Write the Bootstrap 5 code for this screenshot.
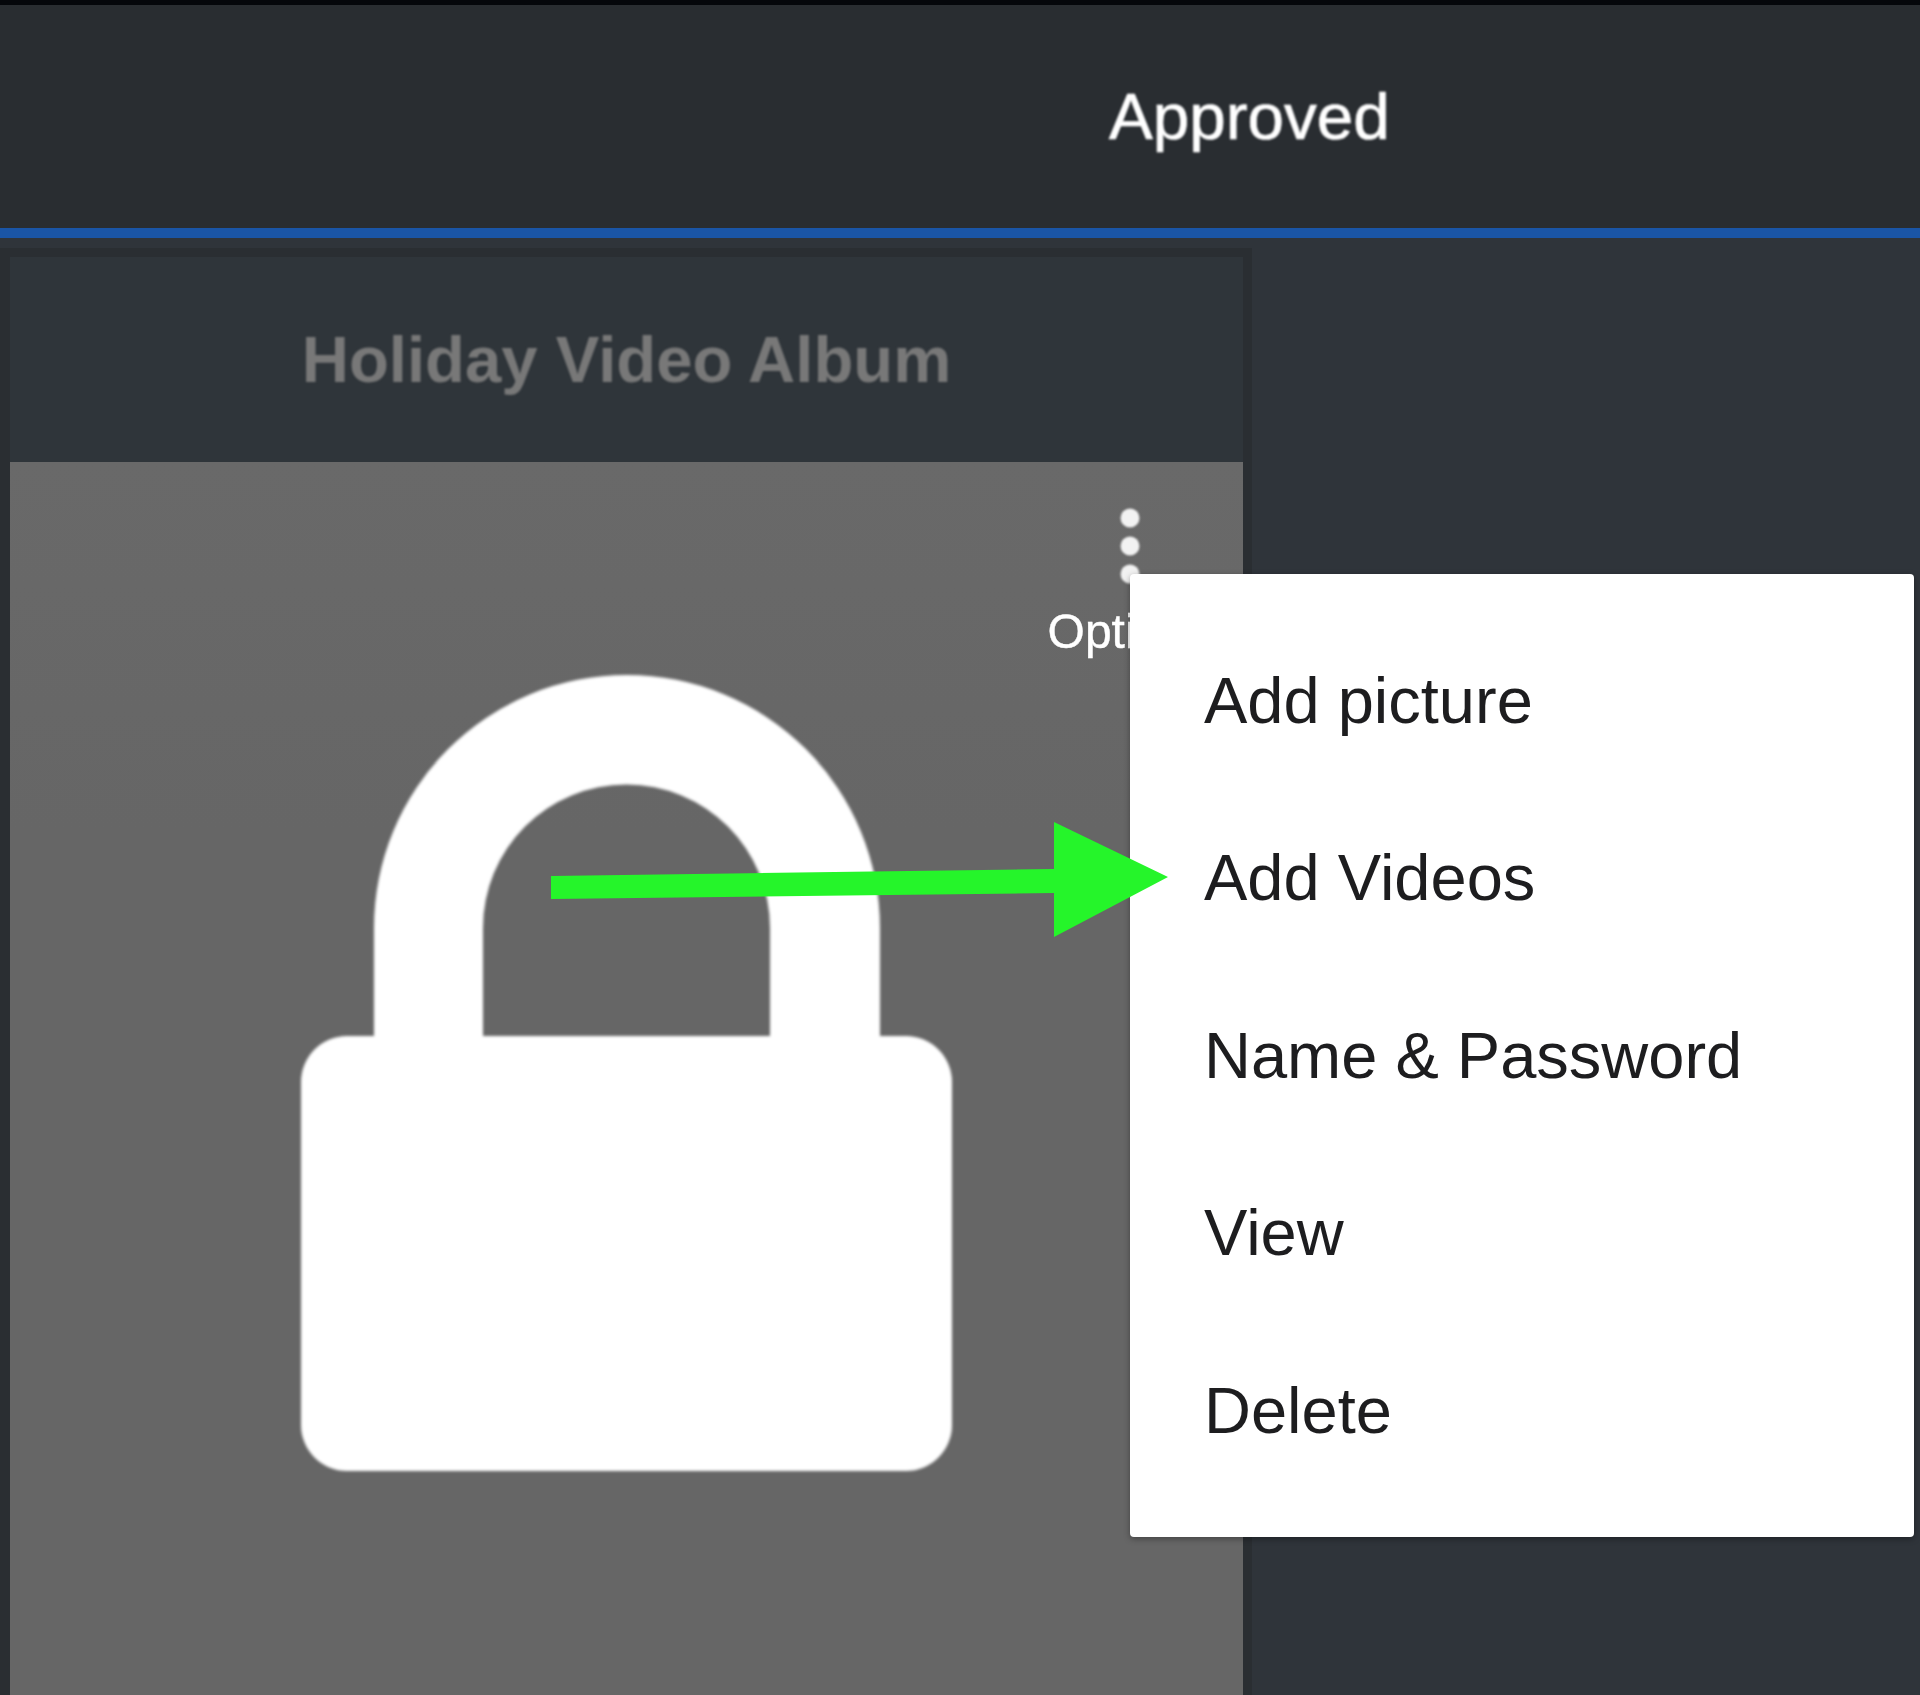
<!DOCTYPE html>
<html lang="en">
<head>
    <meta charset="UTF-8">
    <meta name="viewport" content="width=device-width, initial-scale=1.0">
    <title>Holiday Video Album</title>
    <link href="https://cdn.jsdelivr.net/npm/bootstrap@5.3.0/dist/css/bootstrap.min.css" rel="stylesheet">
    <style>
        html, body { height: 100%; }
        body { font-family: "Liberation Sans", Arial, sans-serif; background-color: #2f343a; overflow: hidden; }
        .top-head { height: 238px; background-color: #292d31; border-top: 5px solid #05070b; border-bottom: 10px solid #1a55a6; padding-left: 1109px; }
        .tab-label { font-size: 65.6px; line-height: 1; color: #fff; margin: 0; filter: blur(.8px); -webkit-text-stroke: .7px #fff; }
        .album-box { width: 1252px; height: 1447px; margin-top: 10px; border: solid #2a2e32; border-width: 9px 9px 0 10px; }
        .album-head { height: 205px; background-color: #2f353a; }
        .album-title { font-size: 65.3px; line-height: 1; color: #787878; margin: 0; filter: blur(.8px); }
        .album-img { height: 1233px; background: linear-gradient(#696969, #666 30%); }
        .opt-toggle { height: 212px; padding: 46px 30px 0 0; color: #fff; }
        .opt-dots { display: block; filter: blur(1px); }
        .opt-label { font-size: 48px; line-height: 1; margin-top: 24px; filter: blur(.7px); -webkit-text-stroke: .4px #fff; }
        .lock-icon { display: block; filter: blur(1.5px); }
        .opt-menu { top: 112px; left: 1120px; width: 784px; padding: 38px 0; border: 0; border-radius: 4px; box-shadow: 0 2px 6px rgba(0, 0, 0, .35); }
        .opt-menu .dropdown-item { height: 177.4px; padding: 0 74px; font-size: 65px; color: #1d1d1f; }
        .opt-menu .dropdown-item span { filter: blur(.7px); }
        .hint-arrow { position: absolute; left: 540px; top: 358px; z-index: 1001; filter: blur(.5px); }
    </style>
</head>
<body>
    <div class="top-head d-flex align-items-center">
        <h1 class="tab-label fw-normal">Approved</h1>
    </div>

    <div class="album-box">
        <div class="album-head d-flex align-items-center justify-content-center">
            <h2 class="album-title fw-bold">Holiday Video Album</h2>
        </div>
        <div class="album-img position-relative">
            <div class="opt-toggle d-flex justify-content-end">
                <div class="d-flex flex-column align-items-center">
                    <svg class="opt-dots" width="20" height="76" viewBox="0 0 20 76" fill="#f2f2f2">
                        <circle cx="10" cy="10" r="9.5"/>
                        <circle cx="10" cy="38" r="9.5"/>
                        <circle cx="10" cy="66" r="9.5"/>
                    </svg>
                    <div class="opt-label">Options</div>
                </div>
            </div>

            <svg class="lock-icon mx-auto" width="652" height="798" viewBox="0 0 652 798" fill="#fff">
                <path d="M73 366V254A253 253 0 0 1 579 254V366H469V254A143.5 143.5 0 0 0 182 254V366Z"/>
                <rect x="0" y="362" width="651" height="435" rx="46"/>
            </svg>

            <ul class="dropdown-menu show opt-menu">
                <li><a class="dropdown-item d-flex align-items-center" href="#"><span>Add picture</span></a></li>
                <li><a class="dropdown-item d-flex align-items-center" href="#"><span>Add Videos</span></a></li>
                <li><a class="dropdown-item d-flex align-items-center" href="#"><span>Name &amp; Password</span></a></li>
                <li><a class="dropdown-item d-flex align-items-center" href="#"><span>View</span></a></li>
                <li><a class="dropdown-item d-flex align-items-center" href="#"><span>Delete</span></a></li>
            </ul>

            <svg class="hint-arrow" width="620" height="120" viewBox="0 0 620 120">
                <polygon fill="#25f52a" points="1,56 504,49 504,2 618,57 504,117 504,73 1,79"/>
            </svg>
        </div>
    </div>

    <script src="https://cdn.jsdelivr.net/npm/bootstrap@5.3.0/dist/js/bootstrap.bundle.min.js"></script>
</body>
</html>
